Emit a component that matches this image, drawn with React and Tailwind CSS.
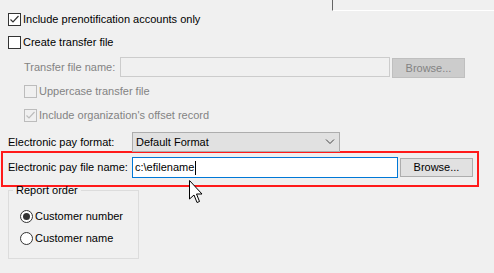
import React from "react";

const font = { fontFamily: '"Liberation Sans", Arial, sans-serif' };

function Check({ checked, disabled }) {
  return (
    <span
      className={
        "flex h-[13px] w-[13px] shrink-0 items-center justify-center border " +
        (disabled ? "border-[#bcbcbc] bg-[#f0f0f0]" : "border-[#333333] bg-white")
      }
    >
      {checked ? (
        <svg width="11" height="11" viewBox="0 0 11 11">
          <path
            d="M1.5 5.5 L4 8 L9.5 2"
            fill="none"
            stroke={disabled ? "#bcbcbc" : "#333333"}
            strokeWidth="1.2"
          />
        </svg>
      ) : null}
    </span>
  );
}

function Radio({ checked }) {
  return (
    <span className="flex h-[13px] w-[13px] shrink-0 items-center justify-center rounded-full border border-[#333333] bg-white">
      {checked ? <span className="h-[7px] w-[7px] rounded-full bg-[#333333]" /> : null}
    </span>
  );
}

export default function App() {
  return (
    <div
      className="relative h-[273px] w-[494px] overflow-hidden whitespace-nowrap bg-[#f0f0f0] text-[11px] leading-none text-black"
      style={font}
    >
      <div className="ml-[332px] h-[11px] border-b border-l border-b-[#ffffff] border-l-[#646464]" />

      <div className="ml-[8px] mt-[2px] flex h-[13px] items-center gap-[2px]">
        <Check checked />
        <span>Include prenotification accounts only</span>
      </div>

      <div className="ml-[8px] mt-[10px] flex h-[13px] items-center gap-[2px]">
        <Check />
        <span>Create transfer file</span>
      </div>

      <div className="mt-[8px] flex h-[21px] items-start">
        <span className="ml-[24px] flex h-[20px] w-[96px] items-center text-[#838383]">
          Transfer file name:
        </span>
        <div className="h-[20px] w-[270px] border border-[#cccccc] bg-[#f0f0f0]" />
        <button className="ml-[2px] mt-[1px] flex h-[20px] w-[73px] items-center justify-center border border-[#bfbfbf] bg-[#cccccc] text-[#838383]">
          Browse...
        </button>
      </div>

      <div className="ml-[24px] mt-[7px] flex h-[13px] items-center gap-[2px] text-[#838383]">
        <Check disabled />
        <span>Uppercase transfer file</span>
      </div>

      <div className="ml-[24px] mt-[11px] flex h-[13px] items-center gap-[2px] text-[#838383]">
        <Check checked disabled />
        <span>Include organization's offset record</span>
      </div>

      <div className="mt-[10px] flex h-[20px] items-center">
        <span className="ml-[8px] w-[124px]">Electronic pay format:</span>
        <div className="flex h-[20px] w-[208px] items-center justify-between border border-[#adadad] bg-[#e1e1e1] pl-[3px] pr-[4px]">
          <span>Default Format</span>
          <svg width="10" height="6" viewBox="0 0 10 6">
            <path d="M1 0.5 L5 4.5 L9 0.5" fill="none" stroke="#444444" strokeWidth="1" />
          </svg>
        </div>
      </div>

      <div className="ml-[1px] mt-[-1px] h-[36px] w-[478px] border-2 border-[#ff1a1a] pt-[4px]">
        <div className="flex items-start">
          <span className="ml-[5px] flex h-[21px] w-[124px] items-center">Electronic pay file name:</span>
          <div className="flex h-[21px] w-[266px] items-center border border-[#0078d7] bg-white pl-[2px]">
            <span>c:\efilename</span>
            <span className="ml-[1px] h-[14px] w-[1px] bg-black" />
          </div>
          <button className="ml-[2px] mt-[1px] flex h-[19px] w-[73px] items-center justify-center border border-[#adadad] bg-[#e1e1e1]">
            Browse...
          </button>
        </div>
      </div>

      <fieldset className="ml-[8px] mt-[-4px] h-[76px] w-[131px] border border-[#dcdcdc] p-0">
        <legend className="ml-[4px] px-[3px] leading-[14px]">Report order</legend>
        <div className="ml-[11px] mt-[13px] flex h-[13px] items-center gap-[2px]">
          <Radio checked />
          <span>Customer number</span>
        </div>
        <div className="ml-[11px] mt-[9px] flex h-[13px] items-center gap-[2px]">
          <Radio />
          <span>Customer name</span>
        </div>
      </fieldset>

      <svg
        className="absolute left-[189px] top-[180px]"
        width="14"
        height="24"
        viewBox="0 0 14 24"
      >
        <path
          d="M0.5 0.5 L0.5 19 L5 15 L8 22.5 L10.5 21.5 L7.5 14 L13 14 Z"
          fill="#ffffff"
          stroke="#000000"
          strokeWidth="1"
          strokeLinejoin="miter"
        />
      </svg>
    </div>
  );
}
